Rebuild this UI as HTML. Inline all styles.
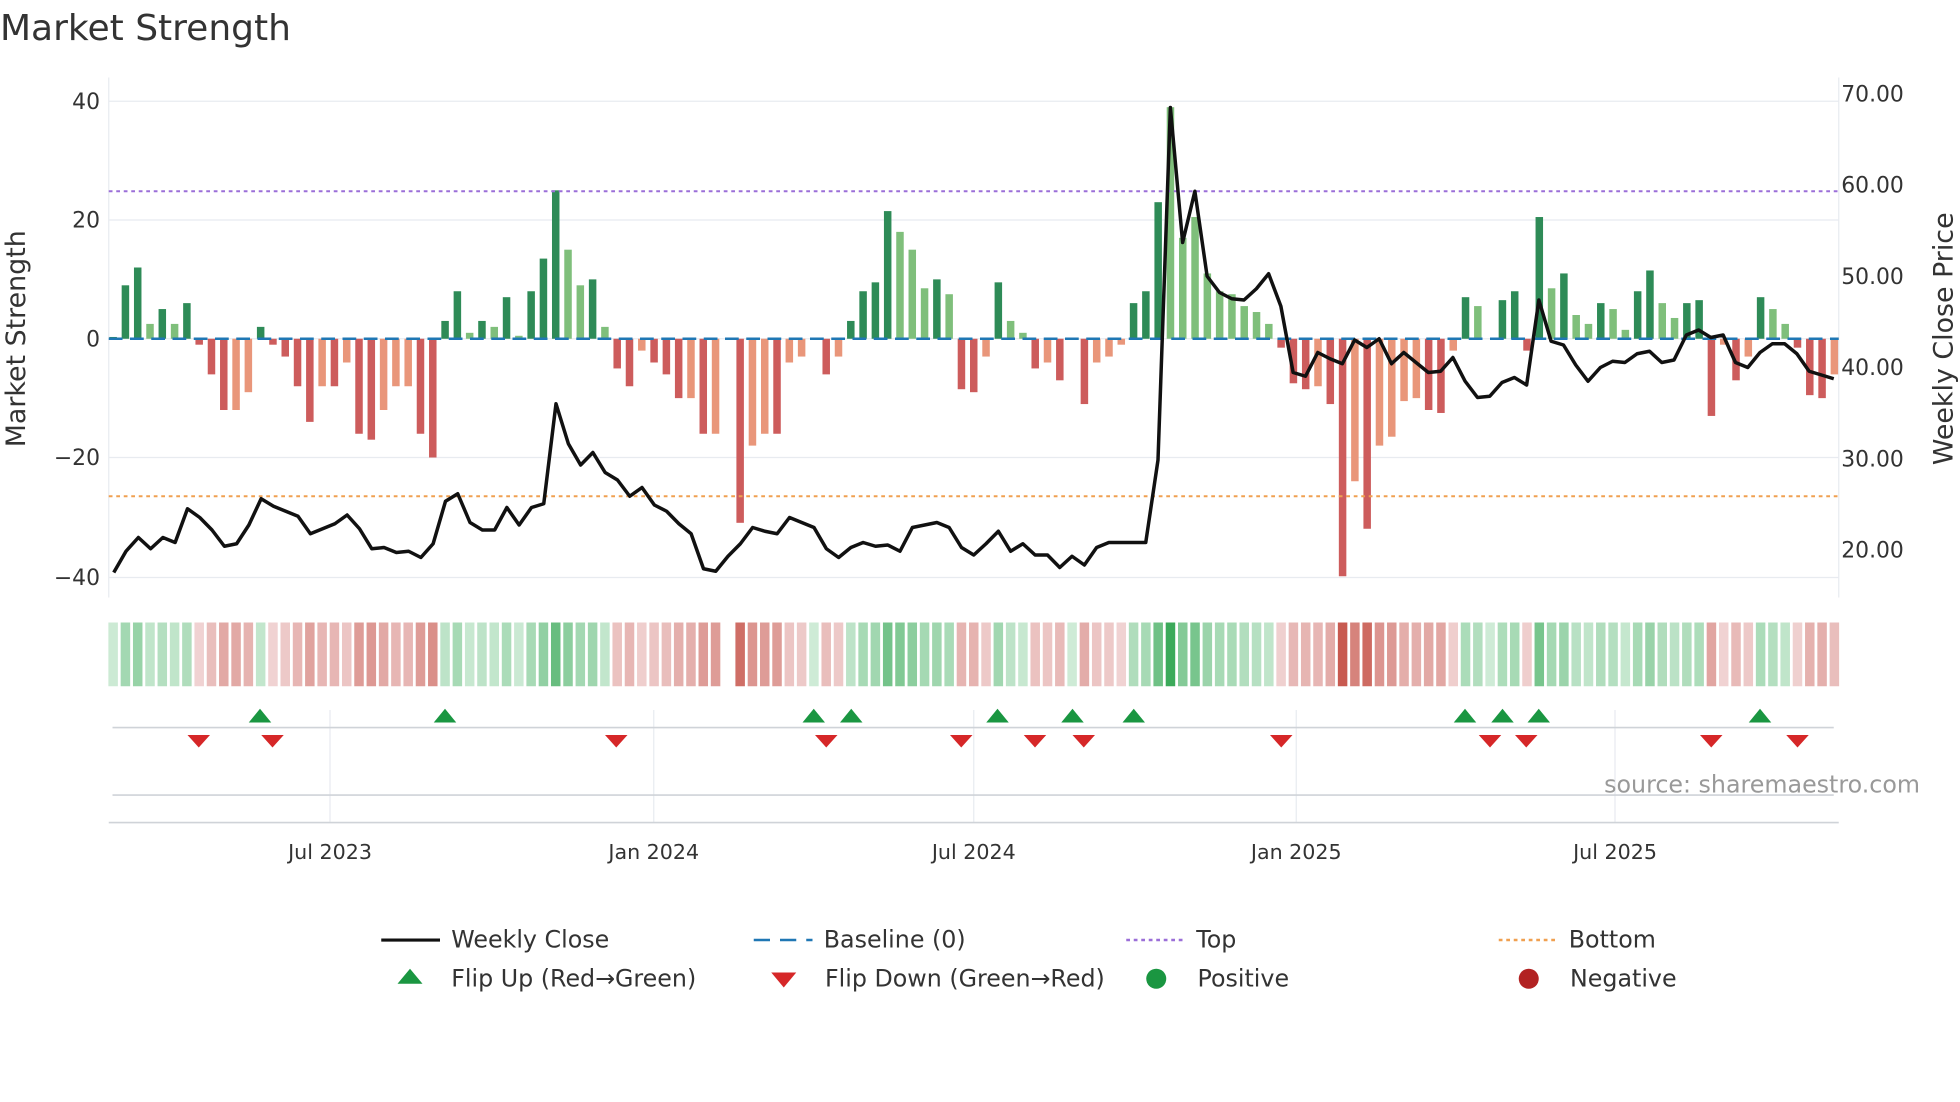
<!DOCTYPE html>
<html><head><meta charset="utf-8"><style>
html,body{margin:0;padding:0;background:#fff;width:1960px;height:1102px;overflow:hidden}
svg{display:block}
text{font-family:"DejaVu Sans","Liberation Sans",sans-serif}
</style></head><body>
<svg id="s" width="1960" height="1102" viewBox="0 0 1568 881.6" xmlns="http://www.w3.org/2000/svg">
<rect width="1568" height="882" fill="#fff"/>
<text x="0" y="32" font-size="28.8" fill="#333">Market Strength</text>
<g id="grid"></g>
<g id="bars"></g>
<g id="heat"></g>
<g id="marks"></g>
<g id="axes" font-size="15.5" fill="#333"></g>
</svg>
<script>
const NS="http://www.w3.org/2000/svg";
function el(p,t,a,txt){const e=document.createElementNS(NS,t);for(const k in a)e.setAttribute(k,a[k]);if(txt!==undefined)e.textContent=txt;document.getElementById(p).appendChild(e);return e;}
const B=[[0.3,0],[9,0],[12,0],[2.5,1],[5,0],[2.5,1],[6,0],[-1,0],[-6,0],[-12,0],[-12,1],[-9,1],[2,0],[-1,0],[-3,0],[-8,0],[-14,0],[-8,1],[-8,0],[-4,1],[-16,0],[-17,0],[-12,1],[-8,1],[-8,1],[-16,0],[-20,0],[3,0],[8,0],[1,1],[3,0],[2,1],[7,0],[0.5,1],[8,0],[13.5,0],[25,0],[15,1],[9,1],[10,0],[2,1],[-5,0],[-8,0],[-2,1],[-4,0],[-6,0],[-10,0],[-10,1],[-16,0],[-16,1],[0,0],[-31,0],[-18,1],[-16,1],[-16,0],[-4,1],[-3,1],[0,0],[-6,0],[-3,1],[3,0],[8,0],[9.5,0],[21.5,0],[18,1],[15,1],[8.5,1],[10,0],[7.5,1],[-8.5,0],[-9,0],[-3,1],[9.5,0],[3,1],[1,1],[-5,0],[-4,1],[-7,0],[0,0],[-11,0],[-4,1],[-3,1],[-1,1],[6,0],[8,0],[23,0],[39,1],[17,1],[20.5,1],[11,1],[8,1],[7.5,1],[5.5,1],[4.5,1],[2.5,1],[-1.5,0],[-7.5,0],[-8.5,0],[-8,1],[-11,0],[-40,0],[-24,1],[-32,0],[-18,1],[-16.5,1],[-10.5,1],[-10,1],[-12,0],[-12.5,0],[-2,1],[7,0],[5.5,1],[0,0],[6.5,0],[8,0],[-2,0],[20.5,0],[8.5,1],[11,0],[4,1],[2.5,1],[6,0],[5,1],[1.5,1],[8,0],[11.5,0],[6,1],[3.5,1],[6,0],[6.5,0],[-13,0],[-1,1],[-7,0],[-3,1],[7,0],[5,1],[2.5,1],[-1.5,0],[-9.5,0],[-10,0],[-6,1]];
const x0=90.5,dx=(1467.5-90.5)/(B.length-1);
const y0=271,ky=4.75;
[81,176,271,366,462].forEach(y=>el('grid','line',{x1:87,x2:1471,y1:y,y2:y,stroke:'#e8ebf0','stroke-width':1}));
el('grid','line',{x1:87,x2:87,y1:62,y2:478,stroke:'#e8ebf0'});
el('grid','line',{x1:1471,x2:1471,y1:62,y2:478,stroke:'#e8ebf0'});
B.forEach((b,i)=>{const x=x0+i*dx,v=b[0];const c=v>=0?(b[1]?'#7fbf7b':'#2e8b57'):(b[1]?'#e9967a':'#cd5c5c');
 const h=Math.abs(v)*ky; if(h>0.3) el('bars','rect',{x:x-3,y:v>=0?y0-h:y0,width:6,height:h,fill:c});
 if(i!==50){let t=Math.min(Math.abs(v)/38,1);let col;
  if(v>=0){const a=[206,235,214],z=[60,170,90];col=`rgb(${a.map((q,j)=>Math.round(q+(z[j]-q)*Math.pow(t,0.85))).join(',')})`;}
  else{const a=[242,216,216],z=[200,90,80];col=`rgb(${a.map((q,j)=>Math.round(q+(z[j]-q)*Math.pow(t,0.85))).join(',')})`;}
  el('heat','rect',{x:x-3.8,y:498,width:7.6,height:51,fill:col});}
});
el('bars','line',{x1:87,x2:1471,y1:271,y2:271,stroke:'#1f77b4','stroke-width':2,'stroke-dasharray':'11 6'});
el('bars','line',{x1:87,x2:1471,y1:153,y2:153,stroke:'#9b6fd8','stroke-width':1.6,'stroke-dasharray':'3 3'});
el('bars','line',{x1:87,x2:1471,y1:397,y2:397,stroke:'#f0a050','stroke-width':1.6,'stroke-dasharray':'3 3'});
const P=[458,441,430,439,430,434,407,414,424,437,435,420,399,405,409,413,427,423,419,412,423,439,438,442,441,446,435,401,395,418,424,424,406,420,406,403,323,355,372,362,378,384,397,390,404,409,419,427,455,457,445,435,422,425,427,414,418,422,439,446,438,434,437,436,441,422,420,418,422,438,444,435,425,441,435,444,444,454,445,452,438,434,434,434,434,368,86,194,153,221,234,239,240,231,219,245,298,301,282,287,291,272,278,271,291,282,290,298,297,286,305,318,317,306,302,308,240,273,276,292,305,294,289,290,283,281,290,288,268,264,270,268,290,294,282,275,275,283,297,300,303];
el('bars','polyline',{points:P.map((y,i)=>(x0+i*(1467-91)/(P.length-1)+0.5).toFixed(1)+','+y).join(' '),fill:'none',stroke:'#111','stroke-width':2.8,'stroke-linejoin':'round'});
const months=[[264,'Jul 2023'],[523,'Jan 2024'],[779,'Jul 2024'],[1037,'Jan 2025'],[1292,'Jul 2025']];
months.forEach(m=>{el('marks','line',{x1:m[0],x2:m[0],y1:568,y2:658,stroke:'#e8ebf0'});el('axes','text',{x:m[0],y:687,'text-anchor':'middle','font-size':'16.5'},m[1]);});
el('marks','line',{x1:90,x2:1467,y1:582,y2:582,stroke:'#cfd3d8','stroke-width':1.3});
el('marks','line',{x1:90,x2:1467,y1:636,y2:636,stroke:'#cfd3d8','stroke-width':1.3});
el('marks','line',{x1:87,x2:1471,y1:658,y2:658,stroke:'#cfd3d8','stroke-width':1.3});
[208,356,651,681,798,858,907,1172,1202,1231,1408].forEach(x=>el('marks','polygon',{points:`${x-9},578 ${x+9},578 ${x},567`,fill:'#1a9641'}));
[159,218,493,661,769,828,867,1025,1192,1221,1369,1438].forEach(x=>el('marks','polygon',{points:`${x-9},588 ${x+9},588 ${x},598`,fill:'#d62728'}));
el('axes','text',{x:1536,y:634,'text-anchor':'end',fill:'#999','font-size':'19'},'source: sharemaestro.com');
[[81,'40'],[176,'20'],[271,'0'],[366,'\u221220'],[462,'\u221240']].forEach(a=>el('axes','text',{x:80,y:a[0]+6,'text-anchor':'end','font-size':'17.5'},a[1]));
[[75,'70.00'],[148,'60.00'],[221,'50.00'],[294,'40.00'],[367,'30.00'],[440,'20.00']].forEach(a=>el('axes','text',{x:1473,y:a[0]+6,'font-size':'17.5'},a[1]));
el('axes','text',{x:20,y:271,'text-anchor':'middle','font-size':'21.5',transform:'rotate(-90 20 271)'},'Market Strength');
el('axes','text',{x:1562,y:271,'text-anchor':'middle','font-size':'21.5',transform:'rotate(-90 1562 271)'},'Weekly Close Price');
const L=[[305,752,'line','Weekly Close'],[603,752,'dash','Baseline (0)'],[901,752,'dot','Top'],[1199,752,'dot2','Bottom'],[328,783,'up','Flip Up (Red\u2192Green)'],[627,783,'down','Flip Down (Green\u2192Red)'],[925,783,'gc','Positive'],[1223,783,'rc','Negative']];
L.forEach(l=>{const [x,y,t,s]=l;
 if(t==='line')el('marks','line',{x1:x,x2:x+47,y1:y,y2:y,stroke:'#111','stroke-width':2.5});
 if(t==='dash')el('marks','line',{x1:x,x2:x+47,y1:y,y2:y,stroke:'#1f77b4','stroke-width':2,'stroke-dasharray':'13 8'});
 if(t==='dot')el('marks','line',{x1:x,x2:x+47,y1:y,y2:y,stroke:'#9b6fd8','stroke-width':2,'stroke-dasharray':'3 3'});
 if(t==='dot2')el('marks','line',{x1:x,x2:x+47,y1:y,y2:y,stroke:'#f0a050','stroke-width':2,'stroke-dasharray':'3 3'});
 if(t==='up')el('marks','polygon',{points:`${x-10},${y+4} ${x+10},${y+4} ${x},${y-8}`,fill:'#1a9641'});
 if(t==='down')el('marks','polygon',{points:`${x-10},${y-5} ${x+10},${y-5} ${x},${y+7}`,fill:'#d62728'});
 if(t==='gc')el('marks','circle',{cx:x,cy:y,r:8,fill:'#1a9641'});
 if(t==='rc')el('marks','circle',{cx:x,cy:y,r:8,fill:'#b22222'});
 el('axes','text',{x:(t==='line'||t==='dash'||t==='dot'||t==='dot2')?x+56:x+33,y:y+6,'font-size':'19'},s);
});
</script>
</body></html>
